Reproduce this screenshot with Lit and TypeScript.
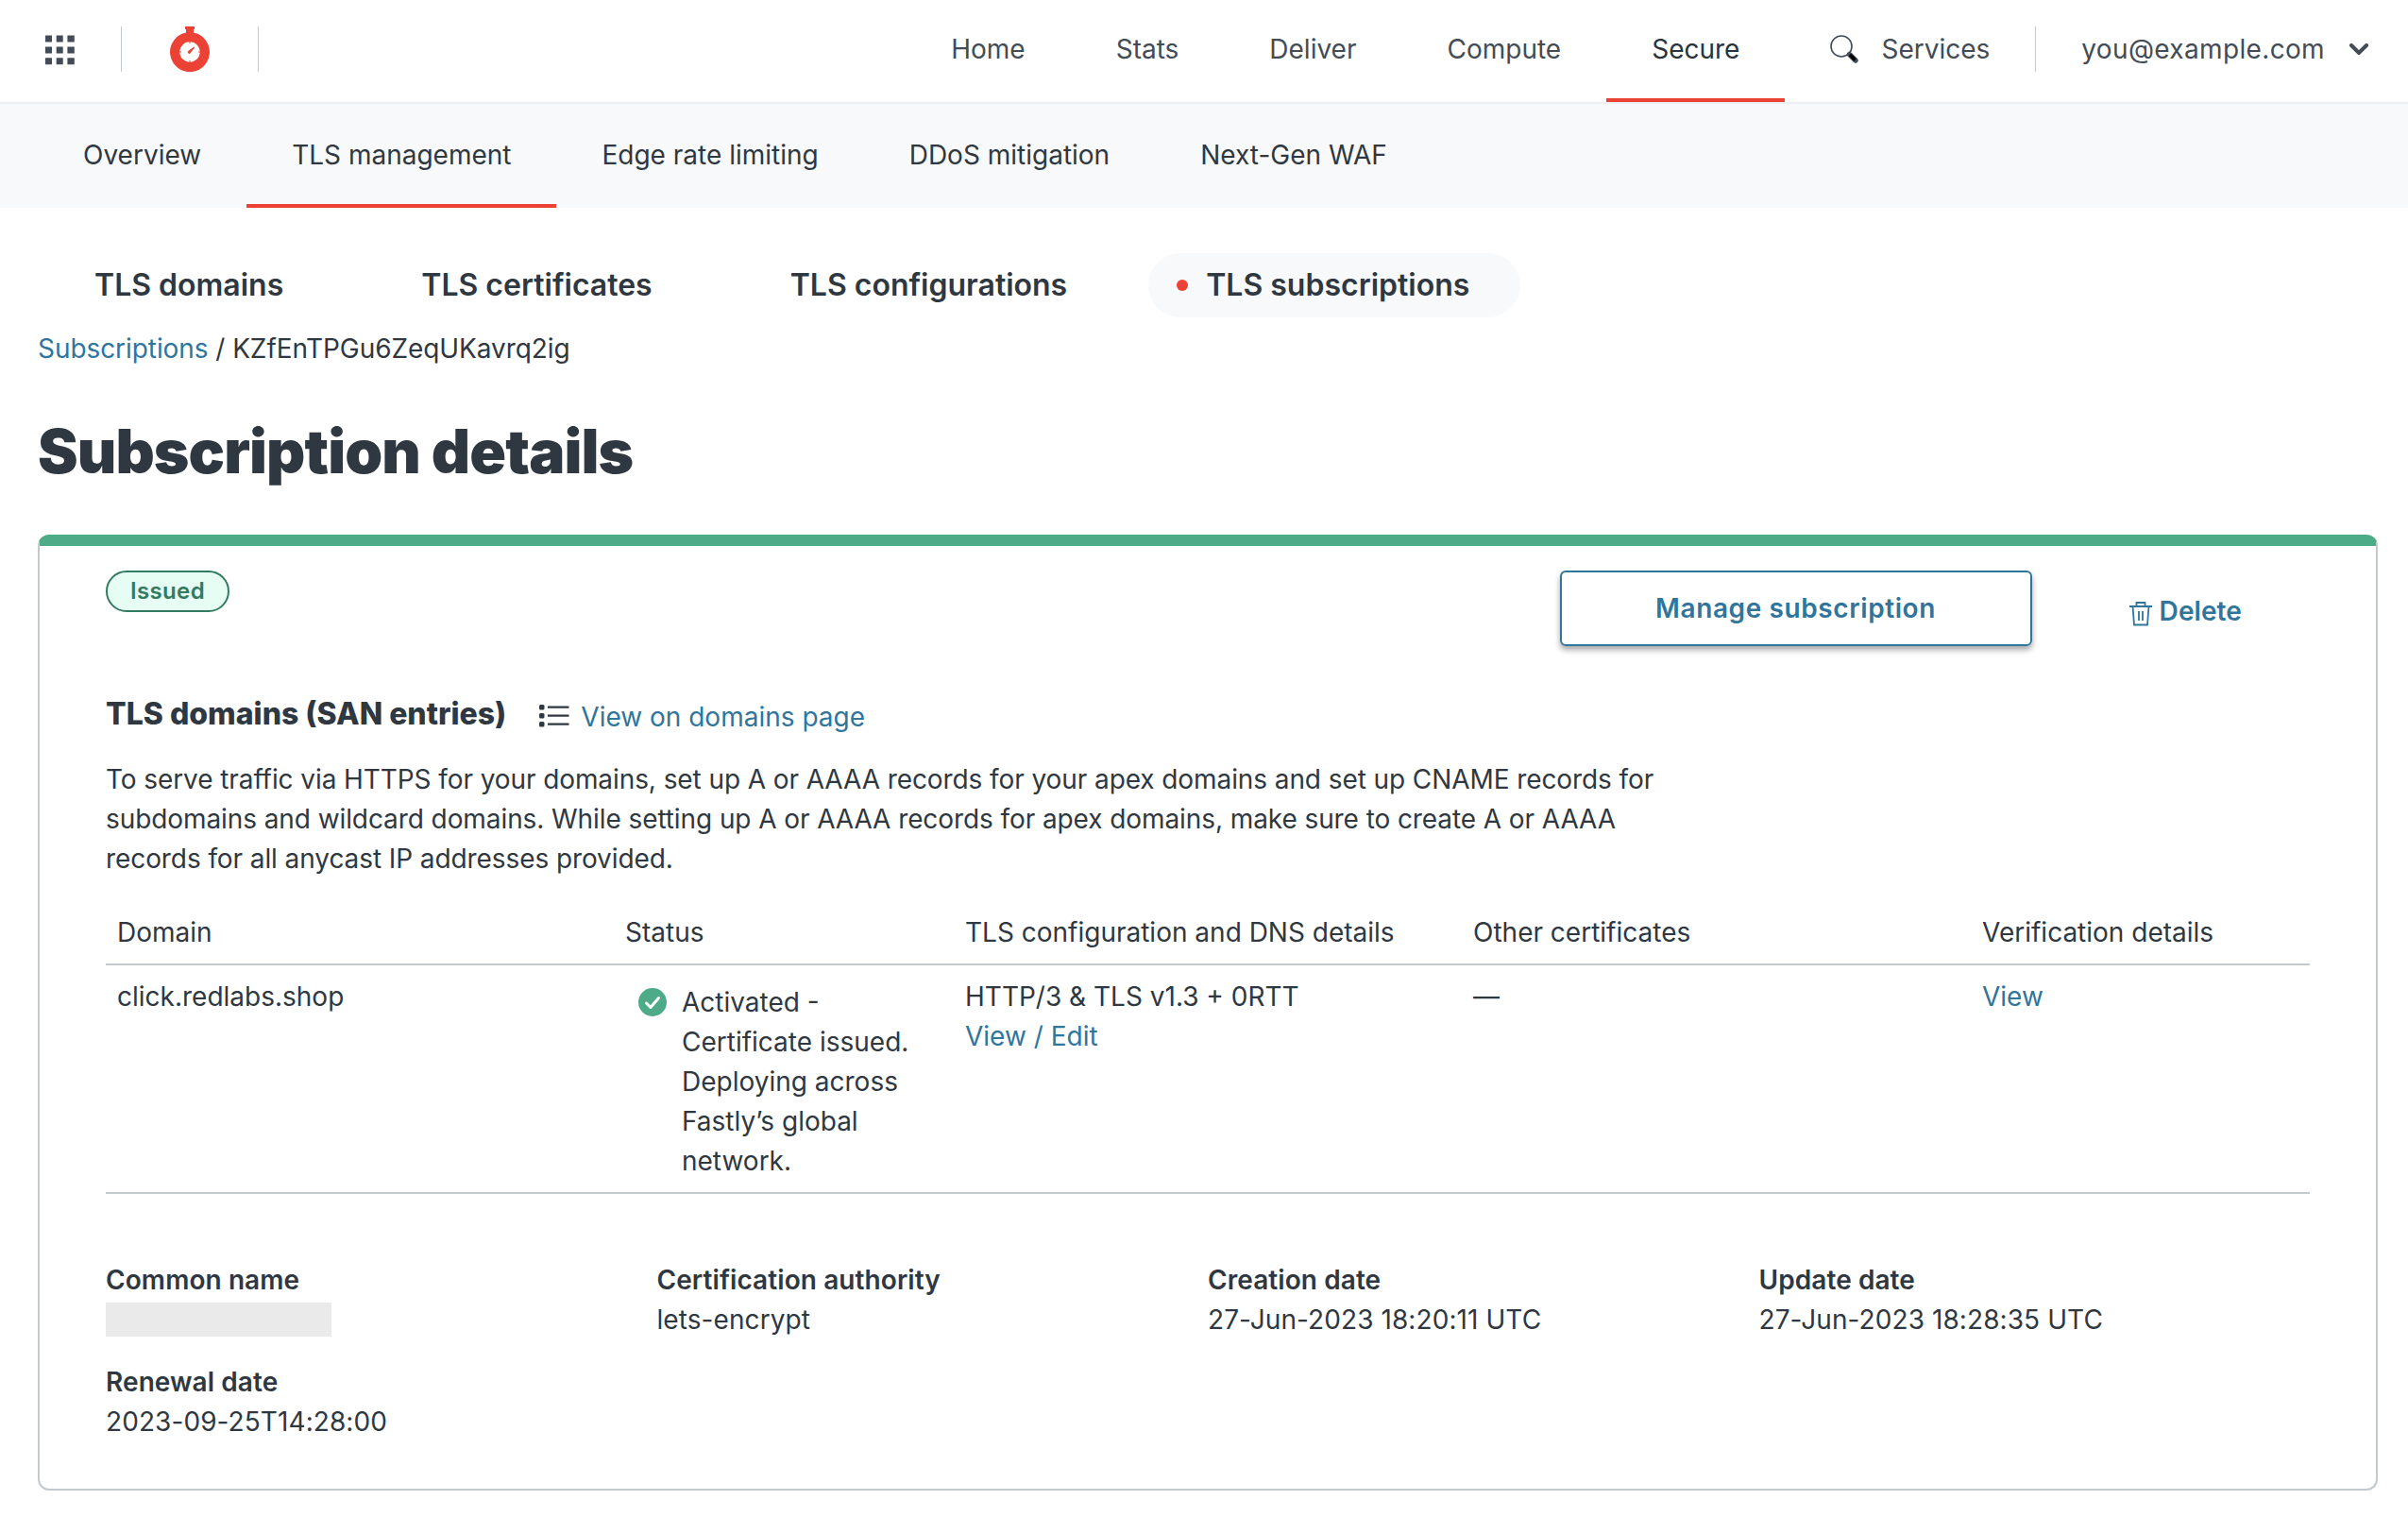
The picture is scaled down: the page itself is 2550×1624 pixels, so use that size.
import { LitElement, html, css } from "lit";
import { customElement } from "lit/decorators.js";

@customElement("app-root")
export class AppRoot extends LitElement {
  static styles = css`
    :host { display: block; width: 2550px; height: 1624px; background: #fff; color: #2f3841; font: 400 28px/42px Inter, "Liberation Sans", sans-serif; overflow: hidden; }
    * { box-sizing: border-box; }
    svg { display: block; flex: none; }
    a { color: #30759c; text-decoration: none; }
    .top { display: flex; align-items: center; height: 110px; border-bottom: 2px solid #eceff2; padding-left: 48px; color: #434c56; }
    .rule { width: 1px; height: 48px; background: #c4c9cd; margin-bottom: 4px; }
    .grid { margin: 0 48px 2px 0; }
    .logo { margin: 0 50px 4px; }
    .nav { display: flex; align-self: stretch; margin-left: auto; }
    .nav .item { display: flex; align-items: center; padding: 0 48px; border-bottom: 4px solid transparent; }
    .nav .item.on { border-color: #eb4235; color: #2a333d; }
    .user { display: flex; align-items: center; gap: 26px; padding: 0 42px 4px 48px; letter-spacing: 0.35px; }
    .svc { display: flex; align-items: center; gap: 24px; padding: 0 48px 4px; }
    .sub { display: flex; height: 110px; background: #f8f9fb; padding-left: 40px; }
    .sub .item { display: flex; align-items: center; padding: 2px 48px 0; border-bottom: 4px solid transparent; }
    .sub .item.on { border-color: #eb4235; }
    .tabs { display: flex; margin: 48px 0 0 40px; font-size: 32px; font-weight: 600; height: 68px; }
    .tab { display: flex; align-items: center; padding: 0 54px 0 60px; border-radius: 34px; margin-right: 32px; }
    .tab.on { background: #f8f9fb; padding-left: 30px; gap: 19px; }
    .dot { width: 12px; height: 12px; border-radius: 50%; background: #eb4235; }
    .crumb { padding: 12px 40px 0; letter-spacing: -0.07px; }
    h1 { margin: 48px 40px 0; font-size: 64px; line-height: 80px; font-weight: 900; letter-spacing: -0.9px; }
    .card { margin: 48px 32px 0 40px; height: 1012px; border: 2px solid #c4c9cd; border-top: 12px solid #4eab88; border-radius: 12px; padding: 26px 70px 0; }
    .head { display: flex; height: 122px; }
    .badge { height: 44px; border: 2px solid #327a61; border-radius: 22px; background: #e6fdf4; color: #327a61; font-size: 24px; line-height: 39px; font-weight: 600; padding: 0 24px; letter-spacing: 0.35px; }
    .btn { margin-left: auto; width: 500px; height: 80px; border: 2px solid #30759c; border-radius: 6px; color: #30759c; font-weight: 600; display: flex; align-items: center; justify-content: center; letter-spacing: 0.6px; box-shadow: 0 4px 6px rgba(0,0,0,.35); }
    .del { display: flex; align-items: center; gap: 8px; height: 86px; margin: 0 72px 0 103px; color: #30759c; font-weight: 600; letter-spacing: 0.1px; }
    .del svg { margin-top: 5px; }
    .title { display: flex; align-items: center; height: 60px; }
    .title svg { margin-top: 3px; }
    h2 { margin: 0 35px 0 0; font-size: 32px; line-height: 48px; font-weight: 800; }
    .title a { margin: 6px 0 0 12px; }
    p { margin: 18px 0 0; width: 1680px; letter-spacing: -0.085px; }
    .table { margin-top: 24px; }
    .row { display: grid; grid-template-columns: 538px 360px 538px 539px 1fr; border-bottom: 2px solid #c4c9cd; padding: 12px 0; }
    .cell { padding: 0 12px; }
    .status { display: flex; padding: 6px 24px 0 26px; gap: 16px; }
    .status svg { margin-top: 6px; }
    .meta { display: grid; grid-template-columns: repeat(4, 1fr); margin-top: 70px; row-gap: 24px; letter-spacing: 0.08px; }
    .meta b { display: block; font-weight: 600; }
    .blank { width: 239px; height: 36px; margin-top: 3px; background: #eaeaea; }
  `;

  render() {
    const fields = [
      ["Common name", ""],
      ["Certification authority", "lets-encrypt"],
      ["Creation date", "27-Jun-2023 18:20:11 UTC"],
      ["Update date", "27-Jun-2023 18:28:35 UTC"],
      ["Renewal date", "2023-09-25T14:28:00"],
    ];
    return html`
      <header class="top">
        <svg class="grid" width="32" height="32" viewBox="0 0 32 32" fill="#434c56">
          <path d="M0 .5h7v7H0zM11.7 .5h7v7h-7zM23.4 .5h7.4v7h-7.4zM0 12.4h7v7H0zM11.7 12.4h7v7h-7zM23.4 12.4h7.4v7h-7.4zM0 24.2h7v7H0zM11.7 24.2h7v7h-7zM23.4 24.2h7.4v7h-7.4z" />
        </svg>
        <i class="rule"></i>
        <svg class="logo" width="44" height="48" viewBox="0 0 44 48"><path fill="#eb4235" d="M17 0h10v3h-1v3.5a21 21 0 1 1-8 0V3h-1z" /><circle cx="22" cy="27" r="10.7" fill="#fff" /><path d="M22 16v2M22 36v2M11 27h2M31 27h2" stroke="#eb4235" stroke-width="1" /><path d="M20.6 25.8l6-4.3.7.7-4.5 5.8a1.6 1.6 0 1 1-2.2-2.2z" fill="#eb4235" /></svg>
        <i class="rule"></i>
        <nav class="nav">${["Home", "Stats", "Deliver", "Compute", "Secure"].map((t) => html`<div class="item ${t === "Secure" ? "on" : ""}">${t}</div>`)}</nav>
        <div class="svc"><svg width="30" height="30" viewBox="0 0 30 30"><circle cx="12" cy="12" r="11" fill="none" stroke="#434c56" stroke-width="1.6" /><path d="M20.5 20.5l6.5 6.5" stroke="#434c56" stroke-width="5.4" stroke-linecap="round" /><path d="M21 21l5.5 5.5" stroke="#000" stroke-width="3.6" /></svg>Services</div>
        <i class="rule"></i>
        <div class="user">you@example.com<svg width="20" height="12" viewBox="0 0 20 12"><path d="M2 2l8 8 8-8" fill="none" stroke="#434c56" stroke-width="4" stroke-linecap="round" /></svg></div>
      </header>
      <nav class="sub">${["Overview", "TLS management", "Edge rate limiting", "DDoS mitigation", "Next-Gen WAF"].map((t) => html`<div class="item ${t === "TLS management" ? "on" : ""}">${t}</div>`)}</nav>
      <nav class="tabs">${["TLS domains", "TLS certificates", "TLS configurations"].map((t) => html`<div class="tab">${t}</div>`)}<div class="tab on"><i class="dot"></i>TLS subscriptions</div></nav>
      <div class="crumb"><a>Subscriptions</a> / KZfEnTPGu6ZeqUKavrq2ig</div>
      <h1>Subscription details</h1>
      <section class="card">
        <div class="head">
          <span class="badge">Issued</span>
          <div class="btn">Manage subscription</div>
          <div class="del"><svg width="24" height="26" viewBox="0 0 24 26" fill="none" stroke="#30759c" stroke-width="1.8"><path d="M0 5h24M7.5 5V1h9v4M3.5 5l1.5 19.5h14L20.5 5M10 10v10M14 10v10" /></svg>Delete</div>
        </div>
        <div class="title">
          <h2>TLS domains (SAN entries)</h2>
          <svg width="32" height="24" viewBox="0 0 32 24"><g fill="#2f3841"><rect width="5.5" height="5.5" rx="1.5" /><rect y="9" width="5.5" height="5.5" rx="1.5" /><rect y="18" width="5.5" height="5.5" rx="1.5" /></g><path d="M9 2.7h22.5M9 11.7h22.5M9 20.7h22.5" stroke="#2f3841" stroke-width="2.2" /></svg>
          <a>View on domains page</a>
        </div>
        <p>To serve traffic via HTTPS for your domains, set up A or AAAA records for your apex domains and set up CNAME records for subdomains and wildcard domains. While setting up A or AAAA records for apex domains, make sure to create A or AAAA records for all anycast IP addresses provided.</p>
        <div class="table">
          <div class="row">${["Domain", "Status", "TLS configuration and DNS details", "Other certificates", "Verification details"].map((t) => html`<div class="cell">${t}</div>`)}</div>
          <div class="row">
            <div class="cell">click.redlabs.shop</div>
            <div class="cell status"><svg width="30" height="30" viewBox="0 0 30 30"><circle cx="15" cy="15" r="15" fill="#4eab88" /><path d="M8.500 16l4.500 4.500 8.500-10" fill="none" stroke="#fff" stroke-width="3" stroke-linecap="round" stroke-linejoin="round" /></svg><span>Activated - Certificate issued. Deploying across Fastly’s global network.</span></div>
            <div class="cell">HTTP/3 &amp; TLS v1.3 + 0RTT<br /><a>View / Edit</a></div>
            <div class="cell">—</div>
            <div class="cell"><a>View</a></div>
          </div>
        </div>
        <div class="meta">${fields.map(([k, v]) => html`<div><b>${k}</b>${v || html`<div class="blank"></div>`}</div>`)}</div>
      </section>
    `;
  }
}
